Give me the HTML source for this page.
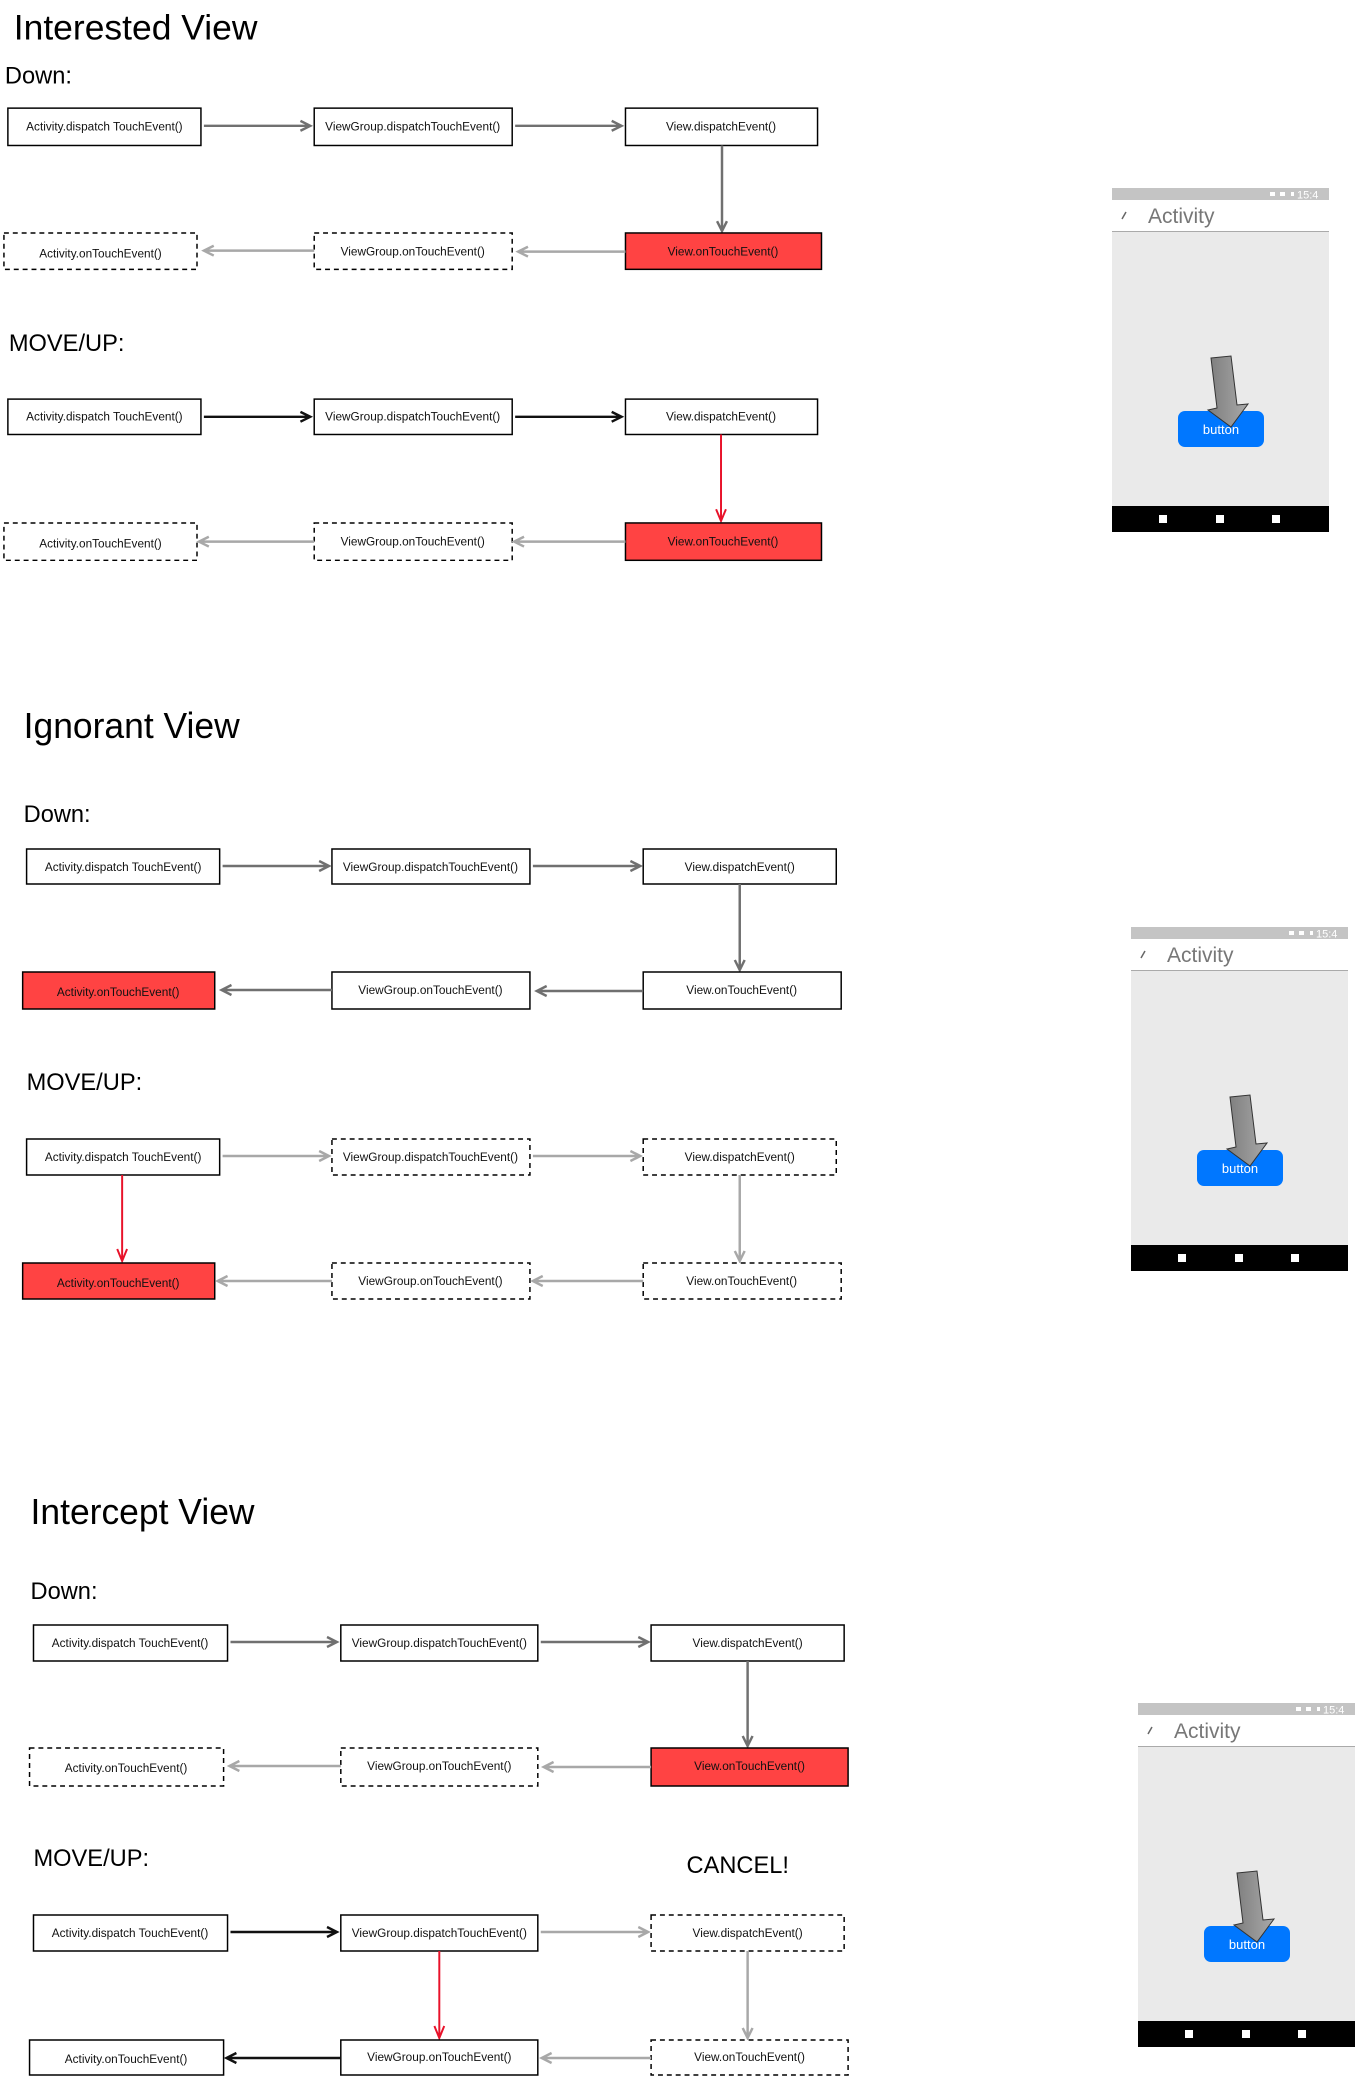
<!DOCTYPE html>
<html><head><meta charset="utf-8">
<style>
html,body{margin:0;padding:0;background:#fff;}
svg{display:block;}
text{font-family:"Liberation Sans",Arial,sans-serif;}
.bt{font-size:12px;fill:#111;text-anchor:middle;}
.h1{font-size:36px;fill:#000;}
.h2{font-size:24px;fill:#000;}
.box{fill:#fff;stroke:#000;stroke-width:1.5;}
.dash{fill:#fff;stroke:#000;stroke-width:1.5;stroke-dasharray:5,4;}
.red{fill:#ff4343;stroke:#000;stroke-width:1.5;}
.ad{stroke:#707070;stroke-width:2.5;fill:none;}
.al{stroke:#a8a8a8;stroke-width:2.5;fill:none;}
.ab{stroke:#111;stroke-width:2.5;fill:none;}
.ar{stroke:#e8122a;stroke-width:2;fill:none;}
</style></head>
<body>
<svg width="1363" height="2076" viewBox="0 0 1363 2076" xmlns="http://www.w3.org/2000/svg">
<defs>
<linearGradient id="ag" x1="0" y1="0" x2="1" y2="0">
<stop offset="0" stop-color="#7d7d7d"/><stop offset="1" stop-color="#a9a9a9"/>
</linearGradient>
<g id="phone">
<rect x="0" y="0" width="217" height="344" fill="#eaeaea"/>
<rect x="0" y="0" width="217" height="12" fill="#c4c4c4"/>
<rect x="0" y="12" width="217" height="31" fill="#fff"/>
<line x1="0" y1="43.5" x2="217" y2="43.5" stroke="#aaa" stroke-width="1"/>
<rect x="158" y="4" width="5" height="4" fill="#fff"/>
<rect x="168" y="4" width="5" height="4" fill="#fff"/>
<rect x="179" y="4" width="3" height="4" fill="#fff"/>
<text x="185" y="10.5" font-size="11" fill="#fff">15:4</text>
<line x1="10" y1="31" x2="14" y2="24" stroke="#666" stroke-width="1.5"/>
<text x="36" y="35" font-size="21" fill="#777">Activity</text>
<rect x="0" y="318" width="217" height="26" fill="#000"/>
<rect x="47" y="327" width="8" height="8" fill="#fff"/>
<rect x="104" y="327" width="8" height="8" fill="#fff"/>
<rect x="160" y="327" width="8" height="8" fill="#fff"/>
<rect x="66" y="223" width="86" height="36" rx="7" fill="#0077ff"/>
<text x="109" y="246" font-size="13" fill="#fff" text-anchor="middle">button</text>
<polygon points="99,170 119,168 125,217 136,216 119,239 96,222 105,220" fill="url(#ag)" stroke="#333" stroke-width="1"/>
</g>
</defs>

<!-- ============ SECTION 1 ============ -->
<g transform="scale(0.985 0.983)">
<text class="h1" x="14" y="40">Interested View</text>
<text class="h2" x="5" y="85">Down:</text>

<rect class="box" x="8" y="110" width="196" height="38"/>
<text class="bt" x="106" y="133">Activity.dispatch TouchEvent()</text>
<rect class="box" x="319" y="110" width="201" height="38"/>
<text class="bt" x="419" y="133">ViewGroup.dispatchTouchEvent()</text>
<rect class="box" x="635" y="110" width="195" height="38"/>
<text class="bt" x="732" y="133">View.dispatchEvent()</text>
<path class="ad" d="M207 128H315M305 123L315 128L305 133"/>
<path class="ad" d="M523 128H631M621 123L631 128L621 133"/>
<path class="ad" d="M733 148V235M728 225L733 235L738 225"/>

<rect class="dash" x="4" y="237" width="196" height="37"/>
<text class="bt" x="102" y="262">Activity.onTouchEvent()</text>
<rect class="dash" x="319" y="237" width="201" height="37"/>
<text class="bt" x="419" y="260">ViewGroup.onTouchEvent()</text>
<rect class="red" x="635" y="237" width="199" height="37"/>
<text class="bt" x="734" y="260">View.onTouchEvent()</text>
<path class="al" d="M635 256H526M536 251L526 256L536 261"/>
<path class="al" d="M319 255H207M217 250L207 255L217 260"/>

<text class="h2" x="9" y="357">MOVE/UP:</text>

<rect class="box" x="8" y="406" width="196" height="36"/>
<text class="bt" x="106" y="428">Activity.dispatch TouchEvent()</text>
<rect class="box" x="319" y="406" width="201" height="36"/>
<text class="bt" x="419" y="428">ViewGroup.dispatchTouchEvent()</text>
<rect class="box" x="635" y="406" width="195" height="36"/>
<text class="bt" x="732" y="428">View.dispatchEvent()</text>
<path class="ab" d="M207 424H315M305 419L315 424L305 429"/>
<path class="ab" d="M523 424H631M621 419L631 424L621 429"/>
<path class="ar" d="M732 442V530M727 518L732 530L737 518"/>

<rect class="dash" x="4" y="532" width="196" height="38"/>
<text class="bt" x="102" y="557">Activity.onTouchEvent()</text>
<rect class="dash" x="319" y="532" width="201" height="38"/>
<text class="bt" x="419" y="555">ViewGroup.onTouchEvent()</text>
<rect class="red" x="635" y="532" width="199" height="38"/>
<text class="bt" x="734" y="555">View.onTouchEvent()</text>
<path class="al" d="M635 551H522M532 546L522 551L532 556"/>
<path class="al" d="M319 551H202M212 546L202 551L212 556"/>
</g>

<use href="#phone" x="1112" y="188"/>

<!-- ============ SECTION 2 ============ -->
<g transform="scale(0.985 1)">
<text class="h1" x="24" y="738">Ignorant View</text>
<text class="h2" x="24" y="822">Down:</text>

<rect class="box" x="27" y="849" width="196" height="35"/>
<text class="bt" x="125" y="871">Activity.dispatch TouchEvent()</text>
<rect class="box" x="337" y="849" width="201" height="35"/>
<text class="bt" x="437" y="871">ViewGroup.dispatchTouchEvent()</text>
<rect class="box" x="653" y="849" width="196" height="35"/>
<text class="bt" x="751" y="871">View.dispatchEvent()</text>
<path class="ad" d="M226 866H334M324 861L334 866L324 871"/>
<path class="ad" d="M541 866H650M640 861L650 866L640 871"/>
<path class="ad" d="M751 884V970M746 960L751 970L756 960"/>

<rect class="red" x="23" y="972" width="195" height="37"/>
<text class="bt" x="120" y="996">Activity.onTouchEvent()</text>
<rect class="box" x="337" y="972" width="201" height="37"/>
<text class="bt" x="437" y="994">ViewGroup.onTouchEvent()</text>
<rect class="box" x="653" y="972" width="201" height="37"/>
<text class="bt" x="753" y="994">View.onTouchEvent()</text>
<path class="ad" d="M653 991H545M555 986L545 991L555 996"/>
<path class="ad" d="M337 990H225M235 985L225 990L235 995"/>

<text class="h2" x="27" y="1090">MOVE/UP:</text>

<rect class="box" x="27" y="1139" width="196" height="36"/>
<text class="bt" x="125" y="1161">Activity.dispatch TouchEvent()</text>
<rect class="dash" x="337" y="1139" width="201" height="36"/>
<text class="bt" x="437" y="1161">ViewGroup.dispatchTouchEvent()</text>
<rect class="dash" x="653" y="1139" width="196" height="36"/>
<text class="bt" x="751" y="1161">View.dispatchEvent()</text>
<path class="al" d="M226 1156H334M324 1151L334 1156L324 1161"/>
<path class="al" d="M541 1156H650M640 1151L650 1156L640 1161"/>
<path class="ar" d="M124 1175V1261M119 1249L124 1261L129 1249"/>
<path class="al" d="M751 1175V1261M746 1251L751 1261L756 1251"/>

<rect class="red" x="23" y="1263" width="195" height="36"/>
<text class="bt" x="120" y="1287">Activity.onTouchEvent()</text>
<rect class="dash" x="337" y="1263" width="201" height="36"/>
<text class="bt" x="437" y="1285">ViewGroup.onTouchEvent()</text>
<rect class="dash" x="653" y="1263" width="201" height="36"/>
<text class="bt" x="753" y="1285">View.onTouchEvent()</text>
<path class="al" d="M653 1281H541M551 1276L541 1281L551 1286"/>
<path class="al" d="M337 1281H221M231 1276L221 1281L231 1286"/>
</g>

<use href="#phone" x="1131" y="927"/>

<!-- ============ SECTION 3 ============ -->
<g transform="scale(0.985 1)">
<text class="h1" x="31" y="1524">Intercept View</text>
<text class="h2" x="31" y="1599">Down:</text>

<rect class="box" x="34" y="1625" width="197" height="36"/>
<text class="bt" x="132" y="1647">Activity.dispatch TouchEvent()</text>
<rect class="box" x="346" y="1625" width="200" height="36"/>
<text class="bt" x="446" y="1647">ViewGroup.dispatchTouchEvent()</text>
<rect class="box" x="661" y="1625" width="196" height="36"/>
<text class="bt" x="759" y="1647">View.dispatchEvent()</text>
<path class="ad" d="M234 1642H342M332 1637L342 1642L332 1647"/>
<path class="ad" d="M549 1642H658M648 1637L658 1642L648 1647"/>
<path class="ad" d="M759 1661V1746M754 1736L759 1746L764 1736"/>

<rect class="dash" x="30" y="1748" width="197" height="38"/>
<text class="bt" x="128" y="1772">Activity.onTouchEvent()</text>
<rect class="dash" x="346" y="1748" width="200" height="38"/>
<text class="bt" x="446" y="1770">ViewGroup.onTouchEvent()</text>
<rect class="red" x="661" y="1748" width="200" height="38"/>
<text class="bt" x="761" y="1770">View.onTouchEvent()</text>
<path class="al" d="M661 1767H552M562 1762L552 1767L562 1772"/>
<path class="al" d="M346 1766H233M243 1761L233 1766L243 1771"/>

<text class="h2" x="34" y="1866">MOVE/UP:</text>
<text class="h2" x="697" y="1873">CANCEL!</text>

<rect class="box" x="34" y="1915" width="197" height="36"/>
<text class="bt" x="132" y="1937">Activity.dispatch TouchEvent()</text>
<rect class="box" x="346" y="1915" width="200" height="36"/>
<text class="bt" x="446" y="1937">ViewGroup.dispatchTouchEvent()</text>
<rect class="dash" x="661" y="1915" width="196" height="36"/>
<text class="bt" x="759" y="1937">View.dispatchEvent()</text>
<path class="ab" d="M234 1932H342M332 1927L342 1932L332 1937"/>
<path class="al" d="M549 1932H658M648 1927L658 1932L648 1937"/>
<path class="ar" d="M446 1951V2038M441 2026L446 2038L451 2026"/>
<path class="al" d="M759 1951V2038M754 2028L759 2038L764 2028"/>

<rect class="box" x="30" y="2040" width="197" height="35"/>
<text class="bt" x="128" y="2063">Activity.onTouchEvent()</text>
<rect class="box" x="346" y="2040" width="200" height="35"/>
<text class="bt" x="446" y="2061">ViewGroup.onTouchEvent()</text>
<rect class="dash" x="661" y="2040" width="200" height="35"/>
<text class="bt" x="761" y="2061">View.onTouchEvent()</text>
<path class="ab" d="M346 2058H230M240 2053L230 2058L240 2063"/>
<path class="al" d="M661 2058H550M560 2053L550 2058L560 2063"/>
</g>

<use href="#phone" x="1138" y="1703"/>
</svg>
</body></html>
